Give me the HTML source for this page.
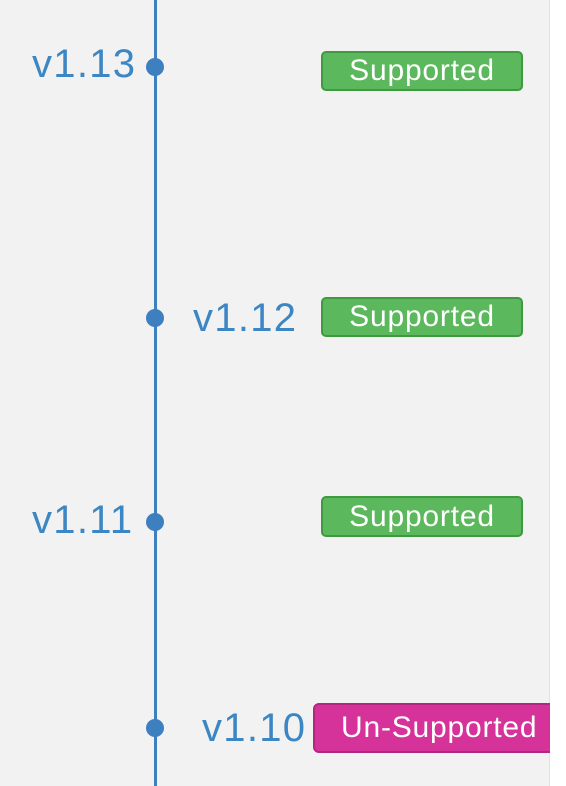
<!DOCTYPE html>
<html><head><style>
html,body{margin:0;padding:0}
body{width:566px;height:786px;position:relative;overflow:hidden;background:#fff;font-family:"Liberation Sans",sans-serif}
.bg{position:absolute;left:0;top:0;width:549px;height:786px;background:#f2f2f2;border-right:1px solid #e2e2e2}
.line{position:absolute;left:154px;top:0;width:3px;height:786px;background:#3e7fc0}
.dot{position:absolute;width:18px;height:18px;border-radius:50%;background:#3e7fc0;left:146px}
.lbl{position:absolute;color:#3d86c4;font-size:40px;line-height:40px;white-space:nowrap;letter-spacing:1.3px}
.b{position:absolute;box-sizing:border-box;background:#5cb85c;border:2px solid #3f9a3f;border-radius:5px;color:#fff;font-size:30px;letter-spacing:0.8px;text-align:center;white-space:nowrap}
.u{background:#d5339a;border-color:#b3267f;border-radius:6px;font-size:30px}
</style></head><body>
<div class="bg"></div>
<div class="line"></div>
<div class="dot" style="top:58px"></div>
<div class="dot" style="top:309px"></div>
<div class="dot" style="top:513px"></div>
<div class="dot" style="top:719px"></div>
<div class="lbl" style="left:32px;top:44px">v1.13</div>
<div class="lbl" style="left:193px;top:298px">v1.12</div>
<div class="lbl" style="left:32px;top:500px">v1.11</div>
<div class="lbl" style="left:202px;top:708px">v1.10</div>
<div class="b" style="left:321px;top:51px;width:202px;height:40px;line-height:36px">Supported</div>
<div class="b" style="left:321px;top:297px;width:202px;height:40px;line-height:36px">Supported</div>
<div class="b" style="left:321px;top:496px;width:202px;height:41px;line-height:37px">Supported</div>
<div class="b u" style="left:313px;top:703px;width:250px;height:50px;line-height:46px;text-align:left;padding-left:26px">Un-Supported</div>
<div style="position:absolute;left:550px;top:0;width:16px;height:786px;background:#fff"></div>
</body></html>
